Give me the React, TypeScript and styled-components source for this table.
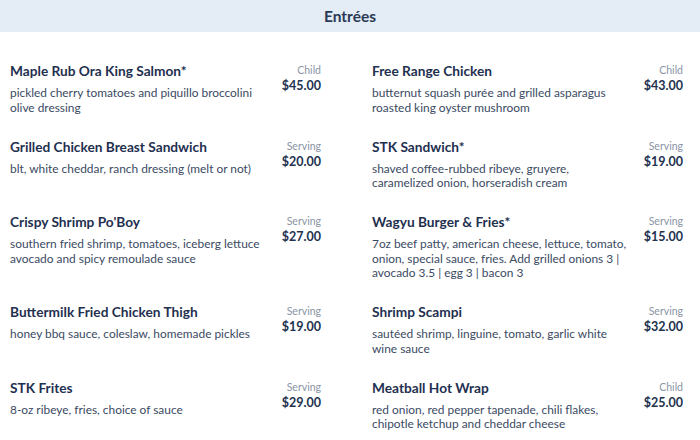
import styled, { createGlobalStyle } from 'styled-components'

const GlobalStyle = createGlobalStyle`
  * {
    margin: 0;
    padding: 0;
    box-sizing: border-box;
  }
  body {
    width: 700px;
    height: 440px;
    overflow: hidden;
    background: #ffffff;
    font-family: Lato, "Open Sans", sans-serif;
  }
`

const Header = styled.div`
  height: 32px;
  background: #e4ecf6;
  display: flex;
  align-items: center;
  justify-content: center;
  h2 {
    font-size: 15.5px;
    font-weight: 700;
    color: #2a3a55;
  }
`

const Grid = styled.div`
  display: grid;
  grid-template-columns: 311px 311px;
  column-gap: 51px;
  padding: 30px 17px 0 10px;
`

const Item = styled.div`
  display: flex;
  justify-content: space-between;
  align-items: flex-start;
  padding-bottom: 22.5px;
`

const Info = styled.div`
  .title {
    font-size: 13.7px;
    font-weight: 700;
    line-height: 18px;
    color: #1f3050;
  }
  .desc {
    margin-top: 6px;
    font-size: 11.9px;
    line-height: 14.5px;
    color: #3b4a63;
    white-space: pre-line;
  }
`

const Price = styled.div`
  text-align: right;
  padding-top: 1px;
  .label {
    font-size: 10.5px;
    line-height: 15px;
    color: #8a94a5;
  }
  .amount {
    font-size: 12.5px;
    font-weight: 700;
    line-height: 16px;
    color: #22324f;
  }
`

type Dish = { name: string; desc: string; label: string; price: string }

const dishes: Dish[] = [
  { name: 'Maple Rub Ora King Salmon*', desc: 'pickled cherry tomatoes and piquillo broccolini\nolive dressing', label: 'Child', price: '$45.00' },
  { name: 'Free Range Chicken', desc: 'butternut squash purée and grilled asparagus\nroasted king oyster mushroom', label: 'Child', price: '$43.00' },
  { name: 'Grilled Chicken Breast Sandwich', desc: 'blt, white cheddar, ranch dressing (melt or not)', label: 'Serving', price: '$20.00' },
  { name: 'STK Sandwich*', desc: 'shaved coffee-rubbed ribeye, gruyere,\ncaramelized onion, horseradish cream', label: 'Serving', price: '$19.00' },
  { name: "Crispy Shrimp Po'Boy", desc: 'southern fried shrimp, tomatoes, iceberg lettuce\navocado and spicy remoulade sauce', label: 'Serving', price: '$27.00' },
  { name: 'Wagyu Burger & Fries*', desc: '7oz beef patty, american cheese, lettuce, tomato,\nonion, special sauce, fries. Add grilled onions 3 |\navocado 3.5 | egg 3 | bacon 3', label: 'Serving', price: '$15.00' },
  { name: 'Buttermilk Fried Chicken Thigh', desc: 'honey bbq sauce, coleslaw, homemade pickles', label: 'Serving', price: '$19.00' },
  { name: 'Shrimp Scampi', desc: 'sautéed shrimp, linguine, tomato, garlic white\nwine sauce', label: 'Serving', price: '$32.00' },
  { name: 'STK Frites', desc: '8-oz ribeye, fries, choice of sauce', label: 'Serving', price: '$29.00' },
  { name: 'Meatball Hot Wrap', desc: 'red onion, red pepper tapenade, chili flakes,\nchipotle ketchup and cheddar cheese', label: 'Child', price: '$25.00' },
]

const App: React.FC = () => {
  return (
    <>
      <GlobalStyle />
      <Header>
        <h2>Entrées</h2>
      </Header>
      <Grid>
        {dishes.map((d, i) => (
          <Item key={i}>
            <Info>
              <div className="title">{d.name}</div>
              <div className="desc">{d.desc}</div>
            </Info>
            <Price>
              <div className="label">{d.label}</div>
              <div className="amount">{d.price}</div>
            </Price>
          </Item>
        ))}
      </Grid>
    </>
  )
}

export default App
